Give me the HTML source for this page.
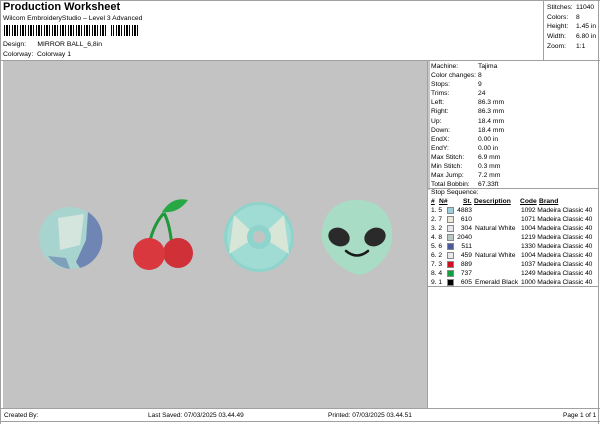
<!DOCTYPE html>
<html><head><style>
*{margin:0;padding:0;box-sizing:border-box}
body{width:600px;height:424px;background:#fff;font-family:"Liberation Sans",sans-serif;font-size:7px;color:#000;position:relative;overflow:hidden}
.a{position:absolute;white-space:nowrap}
.r{font-size:6.7px}
.ln{position:absolute;background:#a0a0a0}
</style></head><body>
<div class="ln" style="left:0;top:0;width:600px;height:1px"></div>
<div class="ln" style="left:0;top:0;width:1px;height:424px"></div>
<div class="ln" style="left:598px;top:0;width:1px;height:424px"></div>
<div class="ln" style="left:543px;top:0;width:1px;height:60px"></div>
<div class="ln" style="left:0;top:60px;width:600px;height:1px"></div>
<div class="a" style="left:3px;top:1px;font-size:11px;font-weight:bold">Production Worksheet</div>
<div class="a" style="left:3px;top:15px;font-size:6.8px">Wilcom EmbroideryStudio – Level 3 Advanced</div>
<div class="a" style="left:4px;top:25px;width:136px;height:11px;background:repeating-linear-gradient(90deg,#000 0 1px,#fff 1px 2px,#000 2px 4px,#fff 4px 5px,#000 5px 6px,#fff 6px 8px)"></div>
<div class="a" style="left:107px;top:25px;width:4px;height:11px;background:#fff"></div>
<div class="a" style="left:3px;top:41px;font-size:6.8px">Design:&nbsp;&nbsp;&nbsp;&nbsp;&nbsp;&nbsp;MIRROR BALL_6,8in</div>
<div class="a" style="left:3px;top:51px;font-size:6.8px">Colorway:&nbsp; Colorway 1</div>
<div class="a r" style="left:547px;top:3px;line-height:9.7px">Stitches:<br>Colors:<br>Height:<br>Width:<br>Zoom:</div>
<div class="a r" style="left:576px;top:3px;line-height:9.7px">11040<br>8<br>1.45 in<br>6.80 in<br>1:1</div>
<div class="a" style="left:3px;top:61px;width:424px;height:347px;background:#c3c3c3"></div>
<div class="a" style="left:427px;top:61px;width:3px;height:129px;background:#c8c8c8"></div>
<div class="ln" style="left:427px;top:61px;width:1px;height:347px"></div>
<div class="a r" style="left:431px;top:62px;line-height:9.1px">Machine:<br>Color changes:<br>Stops:<br>Trims:<br>Left:<br>Right:<br>Up:<br>Down:<br>EndX:<br>EndY:<br>Max Stitch:<br>Min Stitch:<br>Max Jump:<br>Total Bobbin:</div>
<div class="a r" style="left:478px;top:62px;line-height:9.1px">Tajima<br>8<br>9<br>24<br>86.3 mm<br>86.3 mm<br>18.4 mm<br>18.4 mm<br>0.00 in<br>0.00 in<br>6.9 mm<br>0.3 mm<br>7.2 mm<br>67.33ft</div>
<div class="ln" style="left:428px;top:188px;width:170px;height:1px"></div>
<div class="a r" style="left:431px;top:189px">Stop Sequence:</div>
<div class="a r" style="left:431px;top:198px;font-weight:bold;text-decoration:underline">#</div>
<div class="a r" style="left:439px;top:198px;font-weight:bold;text-decoration:underline">N#</div>
<div class="a r" style="left:463px;top:198px;font-weight:bold;text-decoration:underline">St.</div>
<div class="a r" style="left:474px;top:198px;font-weight:bold;text-decoration:underline">Description</div>
<div class="a r" style="left:520px;top:198px;font-weight:bold;text-decoration:underline">Code</div>
<div class="a r" style="left:539px;top:198px;font-weight:bold;text-decoration:underline">Brand</div>
<div class="a r" style="left:431px;top:206px;line-height:9px">1. 5<br>2. 7<br>3. 2<br>4. 8<br>5. 6<br>6. 2<br>7. 3<br>8. 4<br>9. 1</div>
<div class="a" style="left:447px;top:207px;width:7px;height:7px;background:#9ccfdc;border:1px solid #888"></div>
<div class="a" style="left:447px;top:216px;width:7px;height:7px;background:#ece8dc;border:1px solid #888"></div>
<div class="a" style="left:447px;top:225px;width:7px;height:7px;background:#e8e8ec;border:1px solid #888"></div>
<div class="a" style="left:447px;top:234px;width:7px;height:7px;background:#b8c8c4;border:1px solid #888"></div>
<div class="a" style="left:447px;top:243px;width:7px;height:7px;background:#4a5aa0;border:1px solid #888"></div>
<div class="a" style="left:447px;top:252px;width:7px;height:7px;background:#e8e8ec;border:1px solid #888"></div>
<div class="a" style="left:447px;top:261px;width:7px;height:7px;background:#d01020;border:1px solid #888"></div>
<div class="a" style="left:447px;top:270px;width:7px;height:7px;background:#10a040;border:1px solid #888"></div>
<div class="a" style="left:447px;top:279px;width:7px;height:7px;background:#000;border:1px solid #888"></div>
<div class="a r" style="left:455px;top:206px;line-height:9px;text-align:right;width:17px">4883<br>610<br>304<br>2040<br>511<br>459<br>889<br>737<br>605</div>
<div class="a r" style="left:475px;top:206px;line-height:9px"><br><br>Natural White<br><br><br>Natural White<br><br><br>Emerald Black</div>
<div class="a r" style="left:521px;top:206px;line-height:9px;letter-spacing:-0.1px">1092 Madeira Classic 40<br>1071 Madeira Classic 40<br>1004 Madeira Classic 40<br>1219 Madeira Classic 40<br>1330 Madeira Classic 40<br>1004 Madeira Classic 40<br>1037 Madeira Classic 40<br>1249 Madeira Classic 40<br>1000 Madeira Classic 40</div>
<div class="ln" style="left:428px;top:286px;width:170px;height:1px"></div>
<div class="ln" style="left:0;top:408px;width:600px;height:1px"></div>
<div class="ln" style="left:0;top:421px;width:600px;height:1px"></div>
<div class="a" style="left:4px;top:412px;font-size:6.5px">Created By:</div>
<div class="a" style="left:148px;top:412px;font-size:6.5px">Last Saved: 07/03/2025 03.44.49</div>
<div class="a" style="left:328px;top:412px;font-size:6.5px">Printed: 07/03/2025 03.44.51</div>
<div class="a" style="left:563px;top:412px;font-size:6.5px">Page 1 of 1</div>
<svg class="a" style="left:0;top:0" width="600" height="424">
<circle cx="70" cy="238" r="31" fill="#a8d4d0"/>
<path d="M88 212 A31 31 0 0 1 80 268 L76 262 L86 240Z" fill="#6f86b4"/>
<path d="M48 256 A31 31 0 0 0 70 269 L66 258Z" fill="#7fa0b8"/>
<path d="M58 218 L84 214 L80 245 L60 250Z" fill="#dfe8e0" opacity=".8"/>
<path d="M164 213 Q170 224 172 247 M164 213 Q152 226 148 250" stroke="#1e9838" stroke-width="3" fill="none"/>
<path d="M162 212 Q172 196 188 200 Q178 214 162 212Z" fill="#28a845"/>
<circle cx="178" cy="253" r="15" fill="#d03038"/>
<circle cx="149" cy="254" r="16" fill="#d8383e"/>
<circle cx="259" cy="237" r="35" fill="#8fd4cc"/>
<circle cx="259" cy="237" r="32" fill="#a0dbd4"/>
<path d="M234 215 L252 232 L248 242 L229 254Z M284 215 L266 232 L270 242 L289 254Z" fill="#d8e6d8"/>
<circle cx="259" cy="237" r="12" fill="#8fd4cc"/>
<circle cx="259" cy="237" r="6" fill="#c3c3c3"/>
<path d="M357 200 C382 200 394 218 392 240 C390 258 372 273 360 275 C346 273 326 258 322 240 C320 218 332 200 357 200Z" fill="#a8dcc4"/>
<ellipse cx="339" cy="237" rx="11" ry="9" transform="rotate(25 339 237)" fill="#2a2a2a"/>
<ellipse cx="375" cy="237" rx="11" ry="9" transform="rotate(-25 375 237)" fill="#2a2a2a"/>
<path d="M346 251 Q357 260 368 251" stroke="#1a1a1a" stroke-width="2.5" fill="none" stroke-linecap="round"/>
</svg>
</body></html>
